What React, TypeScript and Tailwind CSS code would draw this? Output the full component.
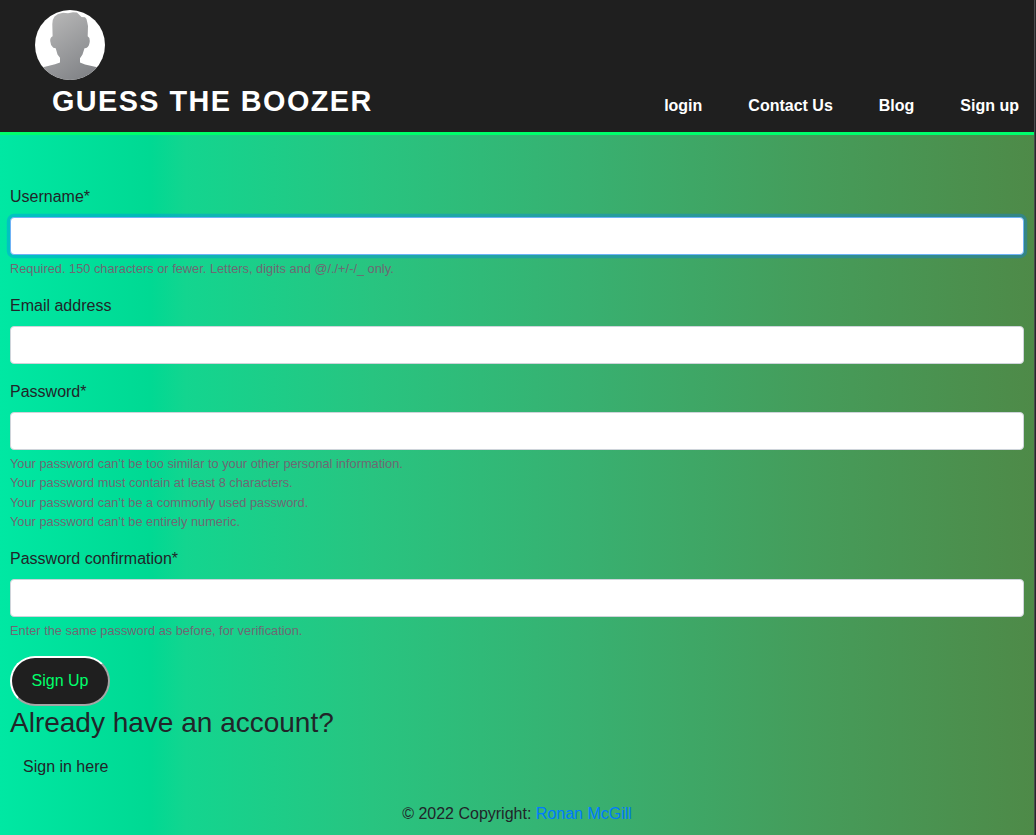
import type { ReactNode } from 'react';

const navItems = ['login', 'Contact Us', 'Blog', 'Sign up'];

function Avatar() {
  return (
    <svg viewBox="0 0 70 70" className="ml-[35px] block size-[70px]" aria-hidden="true">
      <defs>
        <linearGradient id="figure" gradientUnits="userSpaceOnUse" x1="15" y1="3" x2="60" y2="70">
          <stop offset="0" stopColor="#b8b8b8" />
          <stop offset="1" stopColor="#7c7e82" />
        </linearGradient>
        <clipPath id="disc">
          <circle cx="35" cy="35" r="35" />
        </clipPath>
      </defs>
      <circle cx="35" cy="35" r="35" fill="#fff" />
      <path
        clipPath="url(#disc)"
        fill="url(#figure)"
        d="M0 70V59L10 56.700L20 54.300L25 52.600V47.700L22.500 44.500L20.700 38.300L18.300 37.700Q15.300 35 15.200 31Q15 27.500 17.600 26.300L17.300 14Q17.500 9 19.500 6.500L23 4L28 2.700L33 3.300L38 2.200L42 2.600L44.500 5L46.500 7L50 7.300Q52.300 9 52.200 12L53 16L52.700 26.200Q55 27.500 54.800 31Q54.500 36.500 51.300 37.900L49.500 38.300L47.500 44.500L45 48.300V52.600L50 54.500L60 56.700L70 59V70Z"
      />
    </svg>
  );
}

function Field({
  label,
  type = 'text',
  focused = false,
  children,
}: {
  label: string;
  type?: string;
  focused?: boolean;
  children?: ReactNode;
}) {
  return (
    <div className="mb-4">
      <label className="mb-2 block leading-6">{label}</label>
      <input
        type={type}
        aria-label={label}
        className={
          focused
            ? 'block h-[38px] w-full rounded border border-[#6fb2f5] bg-white px-3 shadow-[0_0_0_3.2px_rgba(0,123,255,0.33)] outline-none'
            : 'block h-[38px] w-full rounded border border-[#ced4da] bg-white px-3 outline-none'
        }
      />
      {children && (
        <div className="mt-1 text-[12.8px] leading-[19.2px] text-[#6f6873]">{children}</div>
      )}
    </div>
  );
}

export default function App() {
  return (
    <div className="flex h-[835px] overflow-hidden font-['Liberation_Sans',Arial,sans-serif] text-base text-[#212529]">
      <div className="flex min-w-0 flex-1 flex-col bg-[linear-gradient(90deg,#00e8a3_0%,#00d993_14.5%,#13d58f_18%,#28c480_36%,#38b070_57%,#469b59_80%,#4e8a48_100%)]">
        <header className="flex h-[135px] justify-between border-b-[3px] border-[#00ff6c] bg-[#1f1f1f] pt-2.5 text-white">
          <div>
            <Avatar />
            <h1 className="ml-[52px] mt-0.5 text-[28.8px] font-bold leading-[38px] tracking-[1.44px]">
              GUESS THE BOOZER
            </h1>
          </div>
          <nav className="mr-[15px] flex gap-[46px] pt-[84px] font-bold leading-6">
            {navItems.map((item) => (
              <a key={item} href="#">
                {item}
              </a>
            ))}
          </nav>
        </header>
        <main className="px-2.5 pt-[50px]">
          <form>
            <Field label="Username*" focused>
              Required. 150 characters or fewer. Letters, digits and @/./+/-/_ only.
            </Field>
            <Field label="Email address" type="email" />
            <Field label="Password*" type="password">
              <ul>
                <li>Your password can’t be too similar to your other personal information.</li>
                <li>Your password must contain at least 8 characters.</li>
                <li>Your password can’t be a commonly used password.</li>
                <li>Your password can’t be entirely numeric.</li>
              </ul>
            </Field>
            <Field label="Password confirmation*" type="password">
              Enter the same password as before, for verification.
            </Field>
            <button
              type="button"
              className="block h-[50px] w-[100px] rounded-[25px] border-2 border-b-[#a5a5a5] border-l-white border-r-[#a5a5a5] border-t-white bg-[#1f1f1f] text-[#00ff6c]"
            >
              Sign Up
            </button>
          </form>
          <h2 className="mb-2 text-[28px] leading-[33.6px]">Already have an account?</h2>
          <a href="#" className="inline-block px-[13px] py-[7px] leading-6">
            Sign in here
          </a>
        </main>
        <footer className="mt-4 text-center leading-6">
          © 2022 Copyright: <a href="#" className="text-[#007bff]">Ronan McGill</a>
        </footer>
      </div>
      <div className="w-0.5 shrink-0 border-l border-[#4a4a4d] bg-[#26282b]" />
    </div>
  );
}
